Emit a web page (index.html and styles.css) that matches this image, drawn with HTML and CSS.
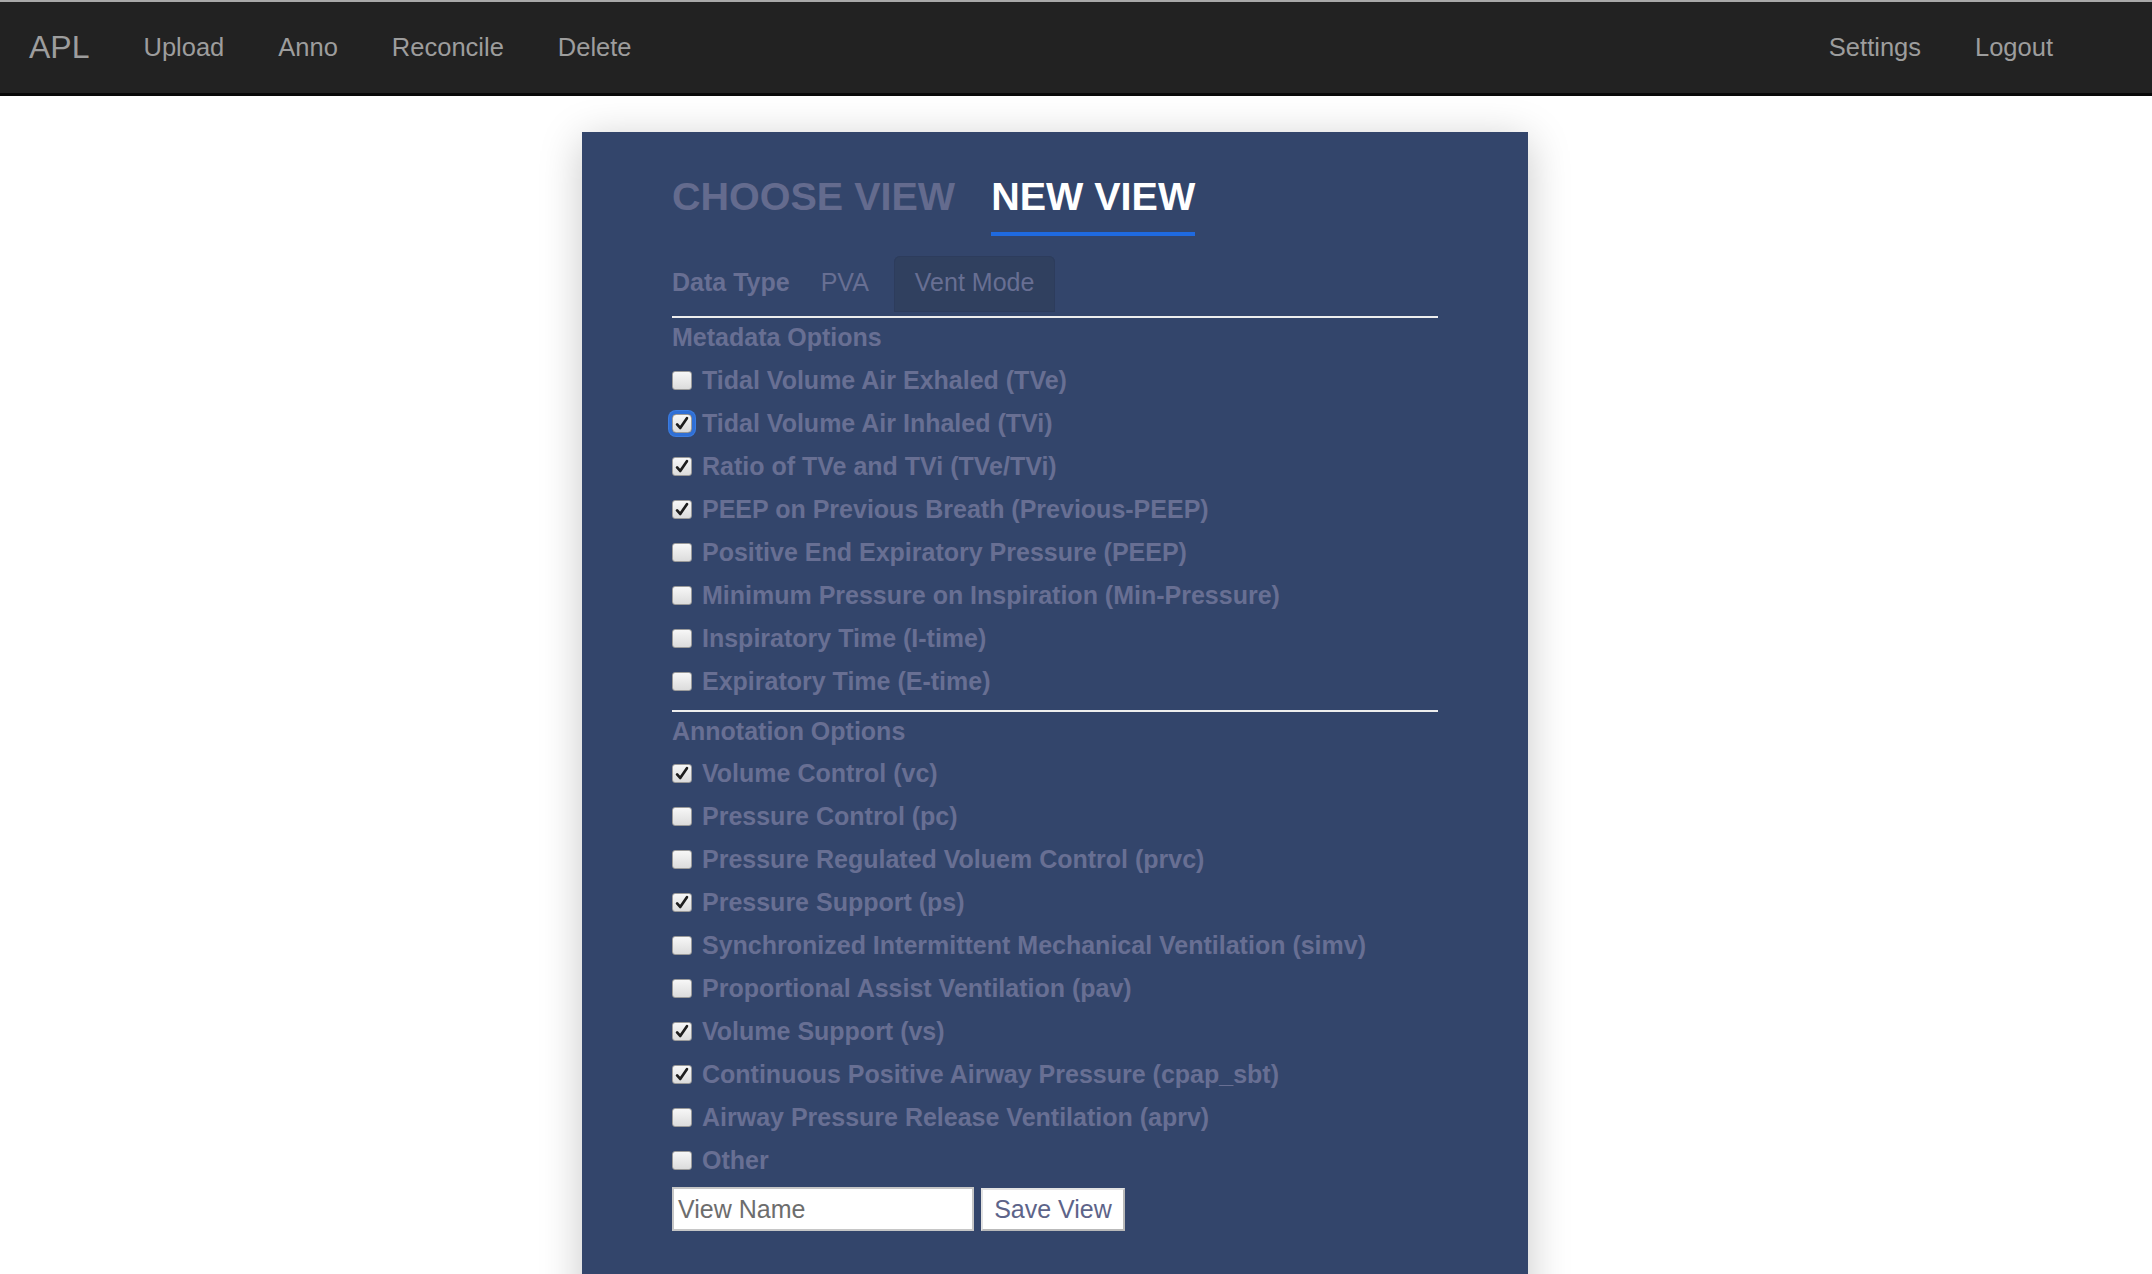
FILE: index.html
```html
<!DOCTYPE html>
<html>
<head>
<meta charset="utf-8">
<title>APL</title>
<link rel="stylesheet" href="styles.css">
</head>
<body>
<nav class="navbar">
  <a class="brand">APL</a>
  <ul class="nav-links">
    <li>Upload</li>
    <li>Anno</li>
    <li>Reconcile</li>
    <li>Delete</li>
  </ul>
  <ul class="nav-links nav-right">
    <li>Settings</li>
    <li>Logout</li>
  </ul>
</nav>

<main class="page">
  <section class="card">
    <div class="view-tabs">
      <div class="view-tab">CHOOSE VIEW</div>
      <div class="view-tab active">NEW VIEW</div>
    </div>

    <div class="type-row">
      <span class="type-label">Data Type</span>
      <span class="type-tab">PVA</span>
      <span class="type-tab selected">Vent Mode</span>
    </div>
    <hr class="rule">

    <h3 class="group-title">Metadata Options</h3>
    <ul class="options">
      <li class="option"><span class="box"></span>Tidal Volume Air Exhaled (TVe)</li>
      <li class="option"><span class="box checked focused"><svg viewBox="0 0 20 19"><path d="M4.5 10.5 L8 14.5 L15.5 3.5"/></svg></span>Tidal Volume Air Inhaled (TVi)</li>
      <li class="option"><span class="box checked"><svg viewBox="0 0 20 19"><path d="M4.5 10.5 L8 14.5 L15.5 3.5"/></svg></span>Ratio of TVe and TVi (TVe/TVi)</li>
      <li class="option"><span class="box checked"><svg viewBox="0 0 20 19"><path d="M4.5 10.5 L8 14.5 L15.5 3.5"/></svg></span>PEEP on Previous Breath (Previous-PEEP)</li>
      <li class="option"><span class="box"></span>Positive End Expiratory Pressure (PEEP)</li>
      <li class="option"><span class="box"></span>Minimum Pressure on Inspiration (Min-Pressure)</li>
      <li class="option"><span class="box"></span>Inspiratory Time (I-time)</li>
      <li class="option"><span class="box"></span>Expiratory Time (E-time)</li>
    </ul>
    <hr class="rule rule-2">

    <h3 class="group-title">Annotation Options</h3>
    <ul class="options options-anno">
      <li class="option"><span class="box checked"><svg viewBox="0 0 20 19"><path d="M4.5 10.5 L8 14.5 L15.5 3.5"/></svg></span>Volume Control (vc)</li>
      <li class="option"><span class="box"></span>Pressure Control (pc)</li>
      <li class="option"><span class="box"></span>Pressure Regulated Voluem Control (prvc)</li>
      <li class="option"><span class="box checked"><svg viewBox="0 0 20 19"><path d="M4.5 10.5 L8 14.5 L15.5 3.5"/></svg></span>Pressure Support (ps)</li>
      <li class="option"><span class="box"></span>Synchronized Intermittent Mechanical Ventilation (simv)</li>
      <li class="option"><span class="box"></span>Proportional Assist Ventilation (pav)</li>
      <li class="option"><span class="box checked"><svg viewBox="0 0 20 19"><path d="M4.5 10.5 L8 14.5 L15.5 3.5"/></svg></span>Volume Support (vs)</li>
      <li class="option"><span class="box checked"><svg viewBox="0 0 20 19"><path d="M4.5 10.5 L8 14.5 L15.5 3.5"/></svg></span>Continuous Positive Airway Pressure (cpap_sbt)</li>
      <li class="option"><span class="box"></span>Airway Pressure Release Ventilation (aprv)</li>
      <li class="option"><span class="box"></span>Other</li>
    </ul>

    <div class="save-row">
      <div class="name-input">View Name</div>
      <button class="save-btn">Save View</button>
    </div>
  </section>
</main>
</body>
</html>
```

FILE: styles.css
```css
html, body {
  margin: 0;
  padding: 0;
  background: #ffffff;
  font-family: "Liberation Sans", Arial, Helvetica, sans-serif;
  overflow: hidden;
}

.navbar {
  display: flex;
  align-items: center;
  height: 91px;
  background: #222222;
  border-top: 2px solid #a9a9a9;
  border-bottom: 3px solid #080808;
  padding: 0 99px 0 29px;
}

.brand {
  font-size: 32px;
  color: #9d9d9d;
  margin-right: 54px;
}

.nav-links {
  display: flex;
  gap: 54px;
  list-style: none;
  margin: 0;
  padding: 0;
  font-size: 25.5px;
  color: #9d9d9d;
}

.nav-right {
  margin-left: auto;
}

.page {
  padding: 36px 0 0 582px;
}

.card {
  width: 946px;
  box-sizing: border-box;
  min-height: 1200px;
  background: #33456b;
  padding: 44px 90px 60px;
  box-shadow: 0 8px 40px rgba(0, 0, 0, 0.22);
  color: #686f93;
}

.view-tabs {
  display: flex;
  gap: 36px;
}

.view-tab {
  font-size: 39.5px;
  font-weight: bold;
  line-height: 40px;
  padding-bottom: 16px;
  border-bottom: 4px solid transparent;
  color: #646b8e;
}

.view-tab.active {
  color: #ffffff;
  border-bottom-color: #1f6ae0;
}

.type-row {
  display: flex;
  margin-top: 20px;
  height: 56px;
  font-size: 25px;
  line-height: 28px;
}

.type-label {
  font-weight: bold;
  padding: 12px 10px 16px 0;
}

.type-tab {
  padding: 12px 21px 16px;
  margin-right: 4px;
  border-radius: 6px 6px 0 0;
}

.type-tab.selected {
  background: #30405f;
  box-shadow: inset 0 0 0 1px #2d3c5c;
}

.rule {
  border: 0;
  height: 2px;
  background: #eeeeee;
  margin: 4px 0 0;
}

.rule-2 {
  margin-top: 7px;
}

.group-title {
  margin: 5px 0 0;
  font-size: 25px;
  line-height: 28px;
  font-weight: bold;
}

.options {
  list-style: none;
  margin: 8px 0 0;
  padding: 0;
}

.options-anno {
  margin-top: 7px;
}

.option {
  display: flex;
  align-items: center;
  height: 43px;
  font-size: 25px;
  font-weight: bold;
  line-height: 43px;
}

.box {
  position: relative;
  width: 20px;
  height: 19px;
  box-sizing: border-box;
  margin-right: 10px;
  border-radius: 3px;
  border: 1px solid #9a9a9a;
  background: linear-gradient(#f7f7f7, #dcdcdc);
  display: flex;
}

.box svg {
  width: 18px;
  height: 17px;
}

.box svg path {
  fill: none;
  stroke: #1e1e1e;
  stroke-width: 3;
  stroke-linecap: round;
  stroke-linejoin: round;
}

.box.focused {
  box-shadow: 0 0 0 3px #2f6fd6, 0 0 0 4px #3b7ce0;
  border-radius: 4px;
}

.save-row {
  display: flex;
  align-items: flex-start;
  gap: 7px;
  margin-top: 5px;
}

.name-input {
  width: 302px;
  height: 44px;
  box-sizing: border-box;
  background: #ffffff;
  border: 2px solid #c6c6c6;
  color: #6d6d6d;
  font-size: 25px;
  line-height: 40px;
  padding-left: 4px;
}

.save-btn {
  margin-top: 1px;
  width: 144px;
  height: 43px;
  box-sizing: border-box;
  background: #ffffff;
  border: 0;
  border-top: 2px solid #e2e2e2;
  border-left: 2px solid #e2e2e2;
  border-right: 2px solid #b9b9b9;
  border-bottom: 2px solid #b9b9b9;
  color: #5d6489;
  font-family: "Liberation Sans", Arial, Helvetica, sans-serif;
  font-size: 25px;
  padding: 0;
}
```
